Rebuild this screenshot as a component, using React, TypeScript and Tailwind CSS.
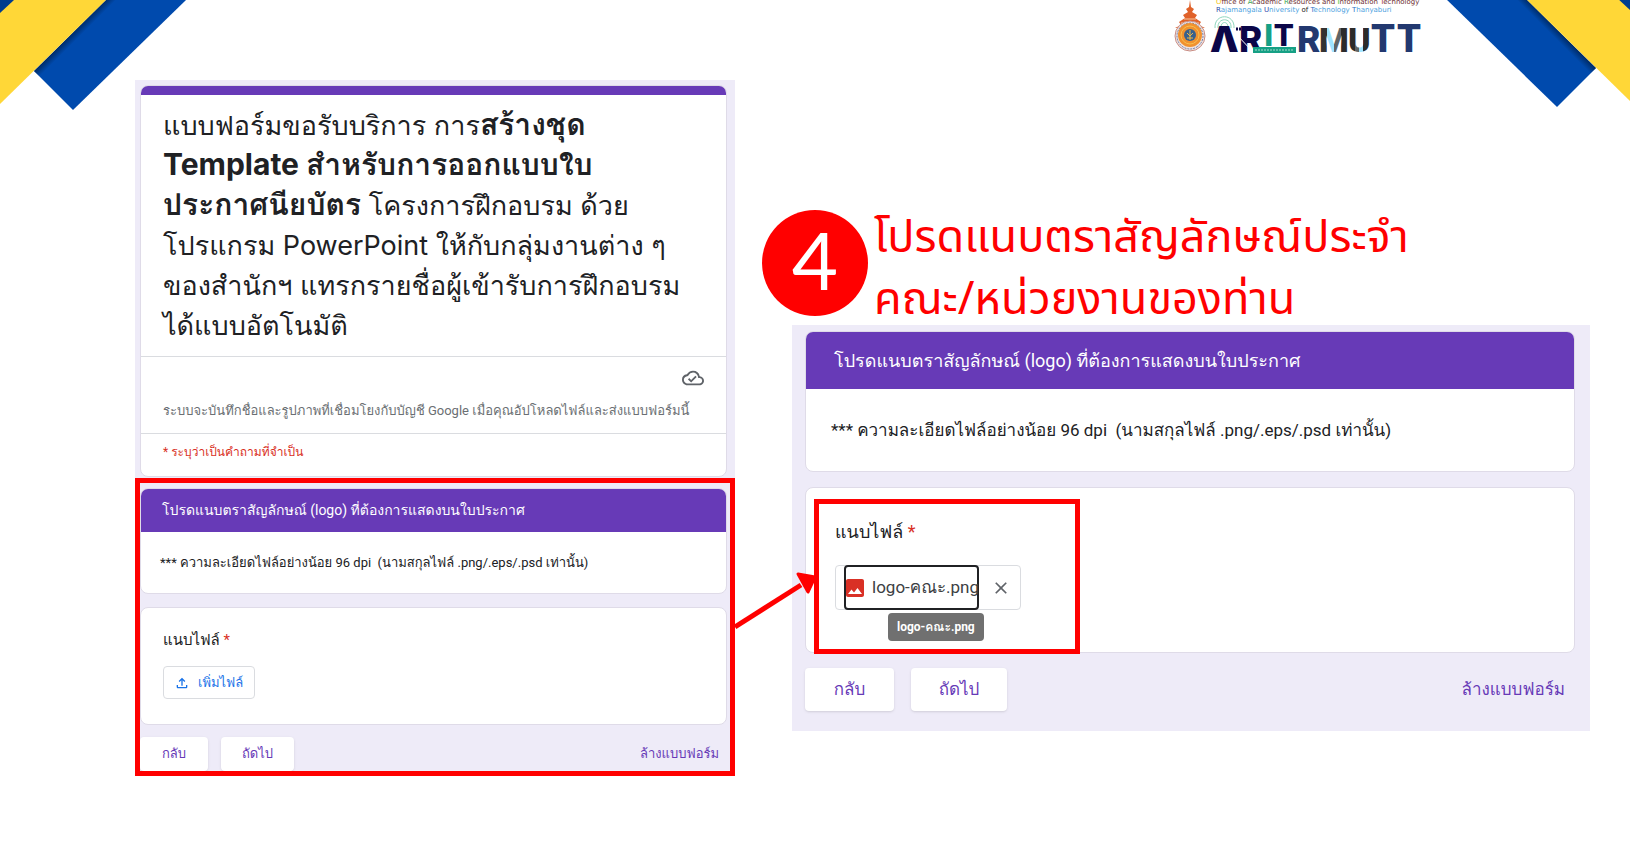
import { ReactNode } from 'react';
import { MdClose, MdImage, MdOutlineCloudDone, MdOutlineFileUpload } from 'react-icons/md';

const SECTION_TITLE = 'โปรดแนบตราสัญลักษณ์ (logo) ที่ต้องการแสดงบนใบประกาศ';
const SECTION_NOTE = '*** ความละเอียดไฟล์อย่างน้อย 96 dpi  (นามสกุลไฟล์ .png/.eps/.psd เท่านั้น)';

function Ribbons({ className }: { className: string }) {
  return (
    <svg className={className} width="186" height="111" viewBox="0 0 186 111" aria-hidden="true">
      <defs>
        <linearGradient id="edge" gradientUnits="userSpaceOnUse" x1="70" y1="36" x2="75" y2="41">
          <stop offset="0" stopColor="#00265a" stopOpacity="0.8" />
          <stop offset="1" stopColor="#00265a" stopOpacity="0" />
        </linearGradient>
      </defs>
      <path d="M106 0H186L73 110L34 71Z" fill="#004aad" />
      <path d="M106 0H120L41 78L34 71Z" fill="url(#edge)" />
      <path d="M0 0H106L0 104Z" fill="#ffd737" />
      <path d="M0 0H14L0 13Z" fill="#003c8e" />
    </svg>
  );
}

function Logo() {
  return (
    <svg width="252" height="54" viewBox="0 0 252 54" role="img" aria-label="ARIT RMUTT">
      <defs>
        <linearGradient id="mFill" x1="0" x2="1" y1="0" y2="0">
          <stop offset="0.27" stopColor="#333" />
          <stop offset="0.27" stopColor="#a0e4ff" />
          <stop offset="0.5" stopColor="#a0e4ff" />
          <stop offset="0.5" stopColor="#5f6466" />
          <stop offset="0.73" stopColor="#5f6466" />
          <stop offset="0.73" stopColor="#2b2b2b" />
        </linearGradient>
        <linearGradient id="uFill" x1="0" x2="1" y1="0" y2="0">
          <stop offset="0.32" stopColor="#2b2b2b" />
          <stop offset="0.32" stopColor="#5f6466" />
          <stop offset="0.5" stopColor="#5f6466" />
          <stop offset="0.5" stopColor="#a0e4ff" />
          <stop offset="0.68" stopColor="#a0e4ff" />
          <stop offset="0.68" stopColor="#2b2b2b" />
        </linearGradient>
      </defs>

      {/* university seal */}
      <path d="M18 0L19 7L22 9L20 12L25 15L23 18L29 22L27 25L33 28H3L9 25L7 22L13 18L11 15L16 12L14 9L17 7Z" fill="#e0622a" />
      <path d="M12 19H24M9 23H27" stroke="#f8c79b" strokeWidth="1" />
      <circle cx="18" cy="36" r="15" fill="#efe3e1" stroke="#c98d84" strokeWidth="1" />
      <circle cx="18" cy="36" r="13" fill="none" stroke="#6d7ba6" strokeWidth="1" strokeDasharray="2 1" />
      <circle cx="18" cy="35" r="12" fill="#f0912f" />
      <circle cx="18" cy="35" r="9" fill="none" stroke="#f6c04e" strokeWidth="1" />
      <circle cx="18" cy="35" r="6" fill="#37608c" />
      <path d="M18 30V40M15 33L18 36L21 33M15 38H21" fill="none" stroke="#e9b64a" strokeWidth="1" />

      <g fontFamily="'DejaVu Sans', sans-serif" fontSize="7" fill="#6b2c30">
        <text x="44" y="4" xmlSpace="preserve">
          <tspan fill="#f5c518">O</tspan>ffice of <tspan fill="#3aa655">A</tspan>cademic <tspan fill="#3aa655">R</tspan>esources and <tspan fill="#35c435">I</tspan>nformation <tspan fill="#a63a4a">T</tspan>echnology
        </text>
        <text x="44" y="12" fill="#4d9fe0" xmlSpace="preserve">
          <tspan fill="#2a4fa8">R</tspan>ajamangala <tspan fill="#2a3fa8">U</tspan>niversity <tspan fill="#222">of</tspan> <tspan fill="#2a6fc8">T</tspan>echnology <tspan fill="#2a6fc8">T</tspan>hanyaburi
        </text>
      </g>

      <g fill="none" stroke="#8fd6bd" strokeWidth="1">
        <path d="M43 28C42 13 63 13 62 28" />
        <path d="M46 28C45 17 60 17 59 28" />
        <path d="M49 27C49 21 56 21 56 27" />
      </g>
      <g fontFamily="Roboto, sans-serif" fontWeight="900" fontSize="36" fill="#0b0648">
        <text x="38" y="52" fontFamily="Inter, sans-serif">Λ</text>
        <text x="67" y="52">R</text>
        <text x="92" y="46" fontSize="31" fill="#16a085">I</text>
        <text x="102" y="46" fontSize="31">T</text>
        <g fill="#22386f">
          <text x="125" y="52">R</text>
          <text x="147" y="52" fontSize="34" fill="url(#mFill)">M</text>
          <text x="176" y="52" fontSize="34" fill="url(#uFill)">U</text>
          <text x="199" y="52" fontSize="38">T</text>
          <text x="225" y="52" fontSize="38">T</text>
        </g>
      </g>
      {/* broken stem of the first R */}
      <path d="M64 34L82 53" stroke="#fff" strokeWidth="1" />
      <path d="M64 29H74" stroke="#0b0648" strokeWidth="3" strokeDasharray="2 1" />
      <rect x="81" y="47" width="43" height="6" fill="#16a085" />
      <path d="M83 50H121" stroke="#a5dccb" strokeWidth="1" strokeDasharray="2 1" />
    </svg>
  );
}

function Card({ className = '', children }: { className?: string; children: ReactNode }) {
  return <div className={`rounded-lg border border-[#dfdbe8] bg-white ${className}`}>{children}</div>;
}

function FileLabel({ className }: { className: string }) {
  return (
    <p className={className}>
      แนบไฟล์ <span className="text-[#d93025]">*</span>
    </p>
  );
}

export default function App() {
  return (
    <div className="relative min-h-screen overflow-hidden bg-white font-[Roboto,Loma,sans-serif] text-[#202124]">
      <Ribbons className="absolute left-0 top-0" />
      <Ribbons className="absolute -top-[3px] right-0 -scale-x-100" />

      <header className="flex h-20 justify-end pr-[206px]">
        <Logo />
      </header>

      <main className="grid grid-cols-[600fr_798fr] gap-x-[57px] pl-[135px] pr-10">
        {/* form before a file is added */}
        <section className="self-start bg-[#eeebf8] pt-[5px]">
          <Card className="ml-[5px] mr-2 overflow-hidden">
            <div className="h-[9px] bg-[#673ab7]" />
            <h1 className="h-[261px] whitespace-nowrap pl-[22px] pt-[11px] font-[Inter,Loma,sans-serif] text-[27px] leading-[40px] [&_b]:text-[30px] [&_b]:leading-none">
              แบบฟอร์มขอรับบริการ การ<b>สร้างชุด</b><br />
              <b>Template สำหรับการออกแบบใบ</b><br />
              <b>ประกาศนียบัตร</b> โครงการฝึกอบรม ด้วย<br />
              โปรแกรม PowerPoint ให้กับกลุ่มงานต่าง ๆ<br />
              ของสำนักฯ แทรกรายชื่อผู้เข้ารับการฝึกอบรม<br />
              ได้แบบอัตโนมัติ
            </h1>
            <div className="h-[77px] border-t border-[#dadce0] px-[22px] pt-[10px]">
              <MdOutlineCloudDone className="ml-auto size-[22px] text-[#5f6368]" />
              <p className="mt-3 whitespace-nowrap text-[13px] leading-5 text-[#6b6f73]">
                ระบบจะบันทึกชื่อและรูปภาพที่เชื่อมโยงกับบัญชี Google เมื่อคุณอัปโหลดไฟล์และส่งแบบฟอร์มนี้
              </p>
            </div>
            <p className="h-[43px] border-t border-[#dadce0] pl-[22px] pt-2 text-[12px] leading-5 text-[#d93025]">
              * ระบุว่าเป็นคำถามที่จำเป็น
            </p>
          </Card>

          <div className="relative mt-px pb-[5px] pl-[5px] pr-2 pt-[10px]">
            <Card className="overflow-hidden">
              <h2 className="bg-[#673ab7] px-[21px] text-[14px] leading-[43px] text-white">{SECTION_TITLE}</h2>
              <p className="whitespace-pre px-[19px] text-[13px] leading-[61px]">{SECTION_NOTE}</p>
            </Card>
            <Card className="mt-[13px] h-[118px] px-[22px] pt-5">
              <FileLabel className="text-[15px] leading-6" />
              <button className="mt-[14px] flex h-[33px] w-[92px] items-center gap-2 rounded border border-[#dadce0] pl-[10px] text-[13px] text-[#1a73e8]">
                <MdOutlineFileUpload className="size-4" />
                เพิ่มไฟล์
              </button>
            </Card>
            <div className="mt-3 flex items-center text-[13px] text-[#673ab7]">
              <button className="h-[34px] w-[68px] rounded bg-white shadow">กลับ</button>
              <button className="ml-[13px] h-[34px] w-[73px] rounded bg-white shadow">ถัดไป</button>
              <button className="ml-auto pr-2">ล้างแบบฟอร์ม</button>
            </div>
            <div className="pointer-events-none absolute inset-0 border-[5px] border-[#ff0000]" />
            {/* arrow to the attached-file step */}
            <svg className="pointer-events-none absolute left-full top-[94px] z-10" width="82" height="60" viewBox="0 0 82 60" aria-hidden="true">
              <path d="M0 55L66 13" stroke="#ff0000" strokeWidth="5" />
              <path d="M63 2L80 5L73 20Z" fill="#ff0000" stroke="#ff0000" strokeWidth="3" strokeLinejoin="round" />
            </svg>
          </div>
        </section>

        {/* step 4 and the form with the file attached */}
        <section>
          <div className="-ml-[30px] mt-[119px] flex h-[126px] items-start gap-[6px]">
            <div className="mt-[11px] grid size-[106px] shrink-0 place-items-center rounded-full bg-[#ff0000] pb-2 font-[Lato,sans-serif] text-[80px] leading-none text-white">
              4
            </div>
            <h2 className="mt-2 whitespace-nowrap font-['Noto_Sans_Thai','Noto_Sans',sans-serif] text-[45px] leading-[62px] text-[#ff0000]">
              โปรดแนบตราสัญลักษณ์ประจำ<br />
              คณะ/หน่วยงานของท่าน
            </h2>
          </div>

          <div className="bg-[#eeebf8] pb-5 pl-[13px] pr-[15px] pt-[6px]">
            <Card className="overflow-hidden">
              <h3 className="bg-[#673ab7] px-7 text-[18px] leading-[57px] text-white">{SECTION_TITLE}</h3>
              <p className="whitespace-pre px-[25px] text-[17px] leading-[82px]">{SECTION_NOTE}</p>
            </Card>
            <Card className="relative mt-[15px] h-[166px] px-[29px] pt-7">
              <FileLabel className="text-[18px] leading-8" />
              <div className="mt-[17px] flex h-[45px] w-[186px] items-center rounded border border-[#dadce0] pl-2">
                <a href="#logo" className="relative flex h-[45px] w-[135px] shrink-0 items-center gap-[5px] rounded border-2 border-[#202124] text-[17px] text-[#3c4043]">
                  <MdImage className="-ml-[3px] size-6 shrink-0 text-[#d93025]" />
                  <span className="whitespace-nowrap">logo-คณะ.png</span>
                  <span className="absolute left-[42px] top-[46px] whitespace-nowrap rounded-sm bg-[#707070] px-[9px] text-[12px] font-bold leading-7 text-white">
                    logo-คณะ.png
                  </span>
                </a>
                <button aria-label="ลบไฟล์" className="ml-3">
                  <MdClose className="size-5 text-[#5f6368]" />
                </button>
              </div>
              <div className="pointer-events-none absolute left-2 top-[11px] h-[155px] w-[266px] border-[5px] border-[#ff0000]" />
            </Card>
            <div className="mt-[15px] flex items-center text-[17px] text-[#673ab7]">
              <button className="h-[43px] w-[89px] rounded bg-white shadow">กลับ</button>
              <button className="ml-[17px] h-[43px] w-24 rounded bg-white shadow">ถัดไป</button>
              <button className="ml-auto pr-[10px]">ล้างแบบฟอร์ม</button>
            </div>
          </div>
        </section>
      </main>
    </div>
  );
}
